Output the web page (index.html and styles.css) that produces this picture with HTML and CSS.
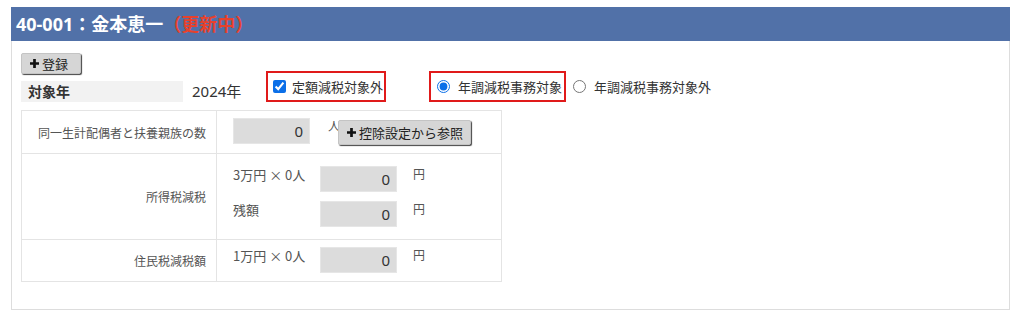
FILE: index.html
```html
<!DOCTYPE html>
<html lang="ja">
<head>
    <meta charset="UTF-8">
    <title>定額減税</title>
    <link rel="stylesheet" href="styles.css">
</head>
<body>
<div class="panel">
    <div class="panel-head">40-001：金本恵一<span class="status">（更新中）</span></div>
    <div class="panel-body">
        <button class="btn btn-save" type="button">
            <svg class="plus" viewBox="0 0 10 10"><path d="M3.5 0h3v3.5H10v3H6.5V10h-3V6.5H0v-3h3.5z"/></svg>登録
        </button>
        <!-- 対象年 -->
        <div class="year-row">
            <div class="year-label">対象年</div>
            <div class="year-value">2024年</div>
            <label class="mark-box mark-check"><input type="checkbox" checked>定額減税対象外</label>
            <label class="mark-box mark-radio"><input type="radio" name="target" checked>年調減税事務対象</label>
            <label class="plain-radio"><input type="radio" name="target">年調減税事務対象外</label>
        </div>
        <!-- 減税額 -->
        <table class="tax-table">
            <tr class="row-count">
                <td class="cell-label">同一生計配偶者と扶養親族の数</td>
                <td class="cell-value">
                    <div class="line">
                        <input class="num" type="text" value="0" readonly>
                        <span class="unit unit-person">人</span>
                        <button class="btn btn-ref" type="button">
                            <svg class="plus" viewBox="0 0 10 10"><path d="M3.5 0h3v3.5H10v3H6.5V10h-3V6.5H0v-3h3.5z"/></svg>控除設定から参照
                        </button>
                    </div>
                </td>
            </tr>
            <tr class="row-income">
                <td class="cell-label">所得税減税</td>
                <td class="cell-value">
                    <div class="line">
                        <span class="calc">3万円 × 0人</span>
                        <input class="num" type="text" value="0" readonly>
                        <span class="unit">円</span>
                    </div>
                    <div class="line">
                        <span class="calc">残額</span>
                        <input class="num" type="text" value="0" readonly>
                        <span class="unit">円</span>
                    </div>
                </td>
            </tr>
            <tr>
                <td class="cell-label">住民税減税額</td>
                <td class="cell-value">
                    <div class="line">
                        <span class="calc">1万円 × 0人</span>
                        <input class="num" type="text" value="0" readonly>
                        <span class="unit">円</span>
                    </div>
                </td>
            </tr>
        </table>
    </div>
</div>
</body>
</html>
```

FILE: styles.css
```css
body {
    margin: 0;
    background: #ffffff;
    color: #333333;
    font-family: "Noto Sans", "Noto Sans CJK JP", sans-serif;
}

.panel {
    margin: 7px 14px 0 11px;
}
.panel-head {
    height: 34px;
    line-height: 34px;
    padding-left: 5px;
    background: #5171a8;
    color: #ffffff;
    font-size: 18px;
    font-weight: bold;
}
.panel-head .status {
    color: #e8412c;
}
.panel-body {
    border: 1px solid #dddddd;
    border-top: none;
    padding: 12px 9px 27px 9px;
}

.btn {
    display: flex;
    align-items: center;
    gap: 3px;
    padding: 0 8px;
    background: #d6d6d6;
    border: 1px solid #c4c4c4;
    border-radius: 2px;
    box-shadow: 1px 1px 1px #444444;
    font-family: "Noto Sans CJK JP", sans-serif;
    font-size: 13px;
    color: #222222;
    cursor: pointer;
}
.btn .plus {
    width: 9px;
    height: 9px;
    fill: #111111;
}
.btn-save {
    width: 60px;
    height: 21px;
}

.year-row {
    display: flex;
    align-items: flex-end;
    margin-top: -3px;
    font-family: "Noto Sans CJK JP", sans-serif;
}
.year-label {
    width: 155px;
    height: 21px;
    line-height: 21px;
    padding-left: 7px;
    margin-right: 9px;
    background: #f2f2f2;
    font-size: 14px;
    font-weight: bold;
}
.year-value {
    width: 74px;
    height: 21px;
    line-height: 21px;
    font-family: "Noto Sans", "Noto Sans CJK JP", sans-serif;
    font-size: 15px;
}
.mark-box,
.plain-radio {
    display: flex;
    align-items: center;
    height: 27px;
    font-size: 13px;
    color: #333333;
}
.mark-box {
    border: 2px solid #e01a1a;
}
.mark-check {
    width: 111px;
    padding-left: 5px;
    margin-right: 43px;
}
.mark-check input {
    margin: 0 6px 0 0;
    accent-color: #0b6fe8;
}
.mark-radio {
    width: 127px;
    padding-left: 6px;
}
.mark-radio input,
.plain-radio input {
    margin: 0 8px 0 0;
    accent-color: #0b6fe8;
}
.plain-radio {
    margin-left: 5px;
    border: 2px solid transparent;
}

.tax-table {
    width: 481px;
    margin-top: 8px;
    border-collapse: collapse;
    table-layout: fixed;
    font-family: "Noto Sans CJK JP", sans-serif;
}
.tax-table td {
    border: 1px solid #e4e4e4;
    vertical-align: middle;
}
.cell-label {
    width: 183px;
    padding-right: 10px;
    text-align: right;
    font-size: 12px;
    color: #555555;
}
.cell-value {
    padding: 7px 0 8px 16px;
}
.row-income .cell-value {
    padding-top: 12px;
    padding-bottom: 12px;
}
.line {
    display: flex;
    align-items: flex-start;
}
.line + .line {
    margin-top: 9px;
}
.calc {
    width: 87px;
    line-height: 18px;
    font-size: 13px;
    color: #555555;
}
.num {
    box-sizing: border-box;
    width: 77px;
    height: 26px;
    margin: 0;
    padding: 0 6px;
    border: 1px solid #e6e6e6;
    background: #dcdcdc;
    text-align: right;
    font-family: "Noto Sans", sans-serif;
    font-size: 15px;
    color: #333333;
    outline: none;
}
.unit {
    margin-left: 16px;
    line-height: 16px;
    font-size: 12px;
    color: #555555;
}
.unit-person {
    margin-left: 18px;
}
.btn-ref {
    height: 25px;
    margin-top: 2px;
    margin-left: -2px;
    padding: 0 7px 0 8px;
}
```
